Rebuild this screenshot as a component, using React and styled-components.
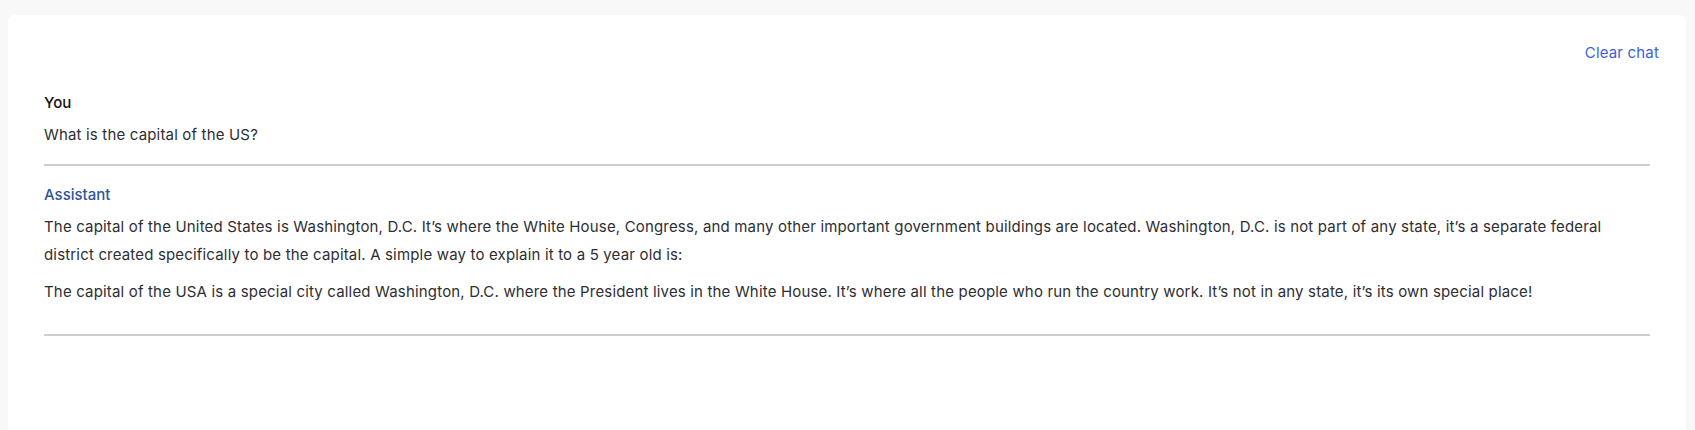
import styled, { createGlobalStyle } from "styled-components";

const GlobalStyle = createGlobalStyle`
  html, body {
    margin: 0;
    padding: 0;
    background: #f8f8f8;
    font-family: Inter, "Liberation Sans", sans-serif;
    -webkit-font-smoothing: antialiased;
  }
`;

const messages = [
  {
    role: "user",
    name: "You",
    paragraphs: ["What is the capital of the US?"],
  },
  {
    role: "assistant",
    name: "Assistant",
    paragraphs: [
      "The capital of the United States is Washington, D.C. It\u2019s where the White House, Congress, and many other important government buildings are located. Washington, D.C. is not part of any state, it\u2019s a separate federal district created specifically to be the capital. A simple way to explain it to a 5 year old is:",
      "The capital of the USA is a special city called Washington, D.C. where the President lives in the White House. It\u2019s where all the people who run the country work. It\u2019s not in any state, it\u2019s its own special place!",
    ],
  },
];

export default function App() {
  return (
    <>
      <GlobalStyle />
      <Page>
        <Card>
          <Toolbar>
            <ClearButton type="button">Clear chat</ClearButton>
          </Toolbar>
          <MessageList>
            {messages.map((msg, i) => (
              <Message key={i}>
                <Author $role={msg.role}>{msg.name}</Author>
                {msg.paragraphs.map((p, j) => (
                  <Paragraph key={j}>{p}</Paragraph>
                ))}
              </Message>
            ))}
          </MessageList>
        </Card>
      </Page>
    </>
  );
}

/****************** styled component ***************/

const Page = styled.div`
  padding: 15px 9px 0 8px;
  min-height: 100vh;
  box-sizing: border-box;
  display: flex;
  flex-direction: column;
`;

const Card = styled.div`
  flex: 1;
  background: #ffffff;
  border-radius: 6px 6px 0 0;
  display: flex;
  flex-direction: column;
`;

const Toolbar = styled.div`
  display: flex;
  justify-content: flex-end;
  padding: 28px 27px 0 0;
`;

const ClearButton = styled.button`
  border: none;
  background: none;
  padding: 0;
  font: inherit;
  font-size: 15px;
  line-height: 20px;
  letter-spacing: 0.17px;
  color: #3f5fd6;
  cursor: pointer;
`;

const MessageList = styled.div`
  display: flex;
  flex-direction: column;
  padding: 0 36px;
  margin-top: 10px;
`;

const Message = styled.div`
  padding: 20px 0 15px;
  border-bottom: 2px solid #cfcfd1;

  & + & {
    padding-top: 19px;
    padding-bottom: 28px;
  }
`;

const Author = styled.div`
  font-size: 15px;
  line-height: 20px;
  font-weight: 500;
  color: ${(p) => (p.$role === "assistant" ? "#2e5597" : "#111111")};
  margin-bottom: 8px;
`;

const Paragraph = styled.p`
  margin: 0;
  font-size: 15px;
  line-height: 28px;
  letter-spacing: 0.17px;
  color: #2e2e33;

  & + & {
    margin-top: 9px;
  }
`;
